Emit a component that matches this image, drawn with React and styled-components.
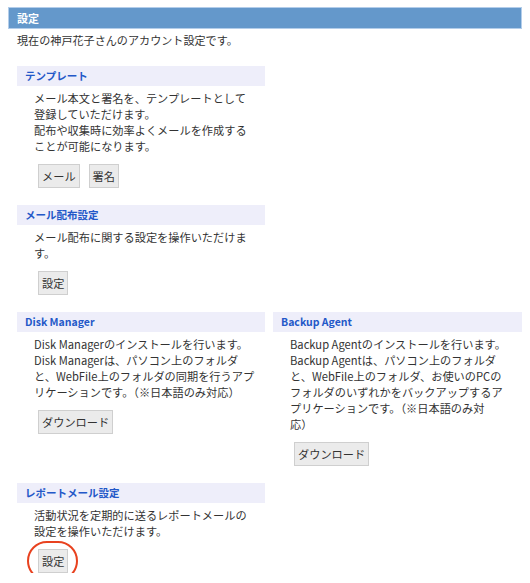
import React from 'react';
import styled, { createGlobalStyle } from 'styled-components';

const GlobalStyle = createGlobalStyle`
  body {
    margin: 0;
    background: #fff;
    font-family: "Noto Sans CJK JP", "Noto Sans", sans-serif;
    color: #333;
  }
`;

const sections = [
  {
    id: 'template',
    title: 'テンプレート',
    lines: [
      'メール本文と署名を、テンプレートとして',
      '登録していただけます。',
      '配布や収集時に効率よくメールを作成する',
      'ことが可能になります。'
    ],
    buttons: ['メール', '署名'],
    col: 1,
    row: 1
  },
  {
    id: 'delivery',
    title: 'メール配布設定',
    lines: ['メール配布に関する設定を操作いただけま', 'す。'],
    buttons: ['設定'],
    col: 1,
    row: 2
  },
  {
    id: 'disk',
    title: 'Disk Manager',
    lines: [
      'Disk Managerのインストールを行います。',
      'Disk Managerは、パソコン上のフォルダ',
      'と、WebFile上のフォルダの同期を行うアプ',
      'リケーションです。（※日本語のみ対応）'
    ],
    buttons: ['ダウンロード'],
    col: 1,
    row: 3
  },
  {
    id: 'backup',
    title: 'Backup Agent',
    lines: [
      'Backup Agentのインストールを行います。',
      'Backup Agentは、パソコン上のフォルダ',
      'と、WebFile上のフォルダ、お使いのPCの',
      'フォルダのいずれかをバックアップするア',
      'プリケーションです。（※日本語のみ対',
      '応）'
    ],
    buttons: ['ダウンロード'],
    col: 2,
    row: 3
  },
  {
    id: 'report',
    title: 'レポートメール設定',
    lines: ['活動状況を定期的に送るレポートメールの', '設定を操作いただけます。'],
    buttons: ['設定'],
    col: 1,
    row: 4,
    highlight: true
  }
];

export default function App() {
  return (
    <>
      <GlobalStyle />
      <Page>
        <TitleBar>設定</TitleBar>
        <Intro>現在の神戸花子さんのアカウント設定です。</Intro>
        <SectionGrid>
          {sections.map(s => (
            <Section key={s.id} $col={s.col} $row={s.row}>
              <SectionHeader>{s.title}</SectionHeader>
              <SectionBody>
                {s.lines.map((line, i) => (
                  <React.Fragment key={i}>
                    {line}
                    {i < s.lines.length - 1 && <br />}
                  </React.Fragment>
                ))}
              </SectionBody>
              <ButtonRow>
                {s.buttons.map(b => (
                  <ButtonWrap key={b} $highlight={s.highlight}>
                    <ActionButton>{b}</ActionButton>
                  </ButtonWrap>
                ))}
              </ButtonRow>
            </Section>
          ))}
        </SectionGrid>
      </Page>
    </>
  );
}

const Page = styled.div`
  padding: 7px 8px 0 8px;
  width: 514px;
`;

const TitleBar = styled.div`
  height: 20px;
  line-height: 20px;
  padding-left: 8px;
  background: #6498cb;
  border: 1px solid #b3cdea;
  color: #fff;
  font-size: 11px;
  font-weight: bold;
`;

const Intro = styled.p`
  margin: 3px 0 0 9px;
  font-size: 11.1px;
  line-height: 16px;
`;

const SectionGrid = styled.div`
  display: grid;
  grid-template-columns: 248px 249px;
  align-items: start;
  column-gap: 8px;
  row-gap: 17px;
  padding-left: 9px;
  margin-top: 18px;
`;

const Section = styled.section`
  grid-column: ${p => p.$col};
  grid-row: ${p => p.$row};
`;

const SectionHeader = styled.div`
  height: 20px;
  line-height: 20px;
  padding-left: 8px;
  background: #eeeefa;
  color: #2358c8;
  font-size: 10.5px;
  font-weight: bold;
`;

const SectionBody = styled.p`
  margin: 4px 0 0 17px;
  font-size: 11.2px;
  line-height: 16px;
  white-space: nowrap;
`;

const ButtonRow = styled.div`
  display: flex;
  gap: 9px;
  margin-top: 10px;
  padding-left: 21px;
`;

const ButtonWrap = styled.div`
  position: relative;

  &::after {
    content: '';
    display: ${p => (p.$highlight ? 'block' : 'none')};
    position: absolute;
    left: -11px;
    right: -10px;
    top: -8px;
    bottom: -8px;
    border: 2px solid #e8421f;
    border-radius: 22px;
    pointer-events: none;
  }
`;

const ActionButton = styled.button`
  display: block;
  height: 24px;
  padding: 0 3px;
  background: #ebebeb;
  border: 1px solid #cfcfcf;
  border-radius: 0;
  color: #333;
  font-family: inherit;
  font-size: 11.2px;
  line-height: 22px;
  cursor: pointer;
`;
